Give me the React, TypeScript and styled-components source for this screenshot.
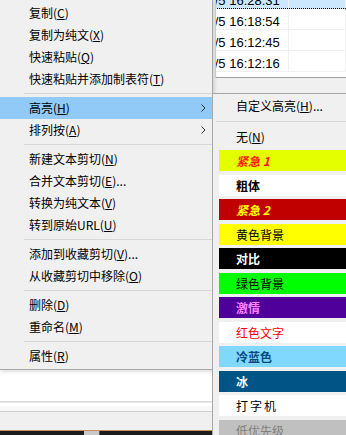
import React from "react";
import styled, { createGlobalStyle } from "styled-components";

const GlobalStyle = createGlobalStyle`
  html, body {
    margin: 0;
    padding: 0;
    width: 346px;
    height: 435px;
    overflow: hidden;
    background: #f0f0f0;
  }
  * { box-sizing: border-box; }
`;

const uiFont = `"Noto Sans CJK SC", "Microsoft YaHei", sans-serif`;

const Window = styled.div`
  position: relative;
  width: 346px;
  height: 435px;
  display: flex;
  flex-direction: column;
  background: #f0f0f0;
  overflow: hidden;
`;

const TopPane = styled.div`
  display: flex;
  height: 78px;
`;

const SidePane = styled.div`
  width: 216px;
  background: #f0f0f0;
  border-right: 1px solid #d4d4d4;
`;

const ListPane = styled.div`
  flex: 1;
  background: #fff;
  border-bottom: 1px solid #a0a0a0;
  overflow: hidden;
`;

const Rows = styled.div<{ $scroll: number }>`
  margin-top: -12px;
  margin-left: ${(p) => -p.$scroll}px;
`;

const Row = styled.div<{ $selected?: boolean }>`
  display: grid;
  grid-template-columns: 114px 1fr;
  height: 21px;
  background: ${(p) => (p.$selected ? "#cce8ff" : "#fff")};
  border-bottom: 1px ${(p) => (p.$selected ? "dotted #000" : "solid #f0f0f0")};
`;

const Cell = styled.div`
  font-family: "Liberation Sans", Arial, sans-serif;
  font-size: 13px;
  color: #000;
  line-height: 21px;
  padding-top: 2px;
  white-space: nowrap;
  overflow: hidden;
  border-right: 1px solid #f0f0f0;
`;

const Filler = styled.div`
  flex: 1;
`;

const Editor = styled.div`
  height: 33px;
  background: #fff;
  border-bottom: 1px solid #dadada;
`;

const Ruler = styled.div`
  height: 10px;
  background: #f8f8f8;
  border-top: 1px solid #e8e8e8;
  border-bottom: 1px solid #d0d0d0;
  box-shadow: inset 0 3px 0 #fff;
`;

const StatusGap = styled.div`
  height: 18px;
`;

const Taskbar = styled.div`
  height: 5px;
  background: #1c1c1c;
  border-top: 1px solid #c8915a;
  display: flex;
  padding-left: 84px;
`;

const TaskButton = styled.div`
  width: 16px;
  background: #c9c9c9;
  border-right: 1px solid #555;
`;

const Menu = styled.div`
  position: absolute;
  top: -2px;
  left: -1px;
  width: 214px;
  padding: 3px 0 2px;
  background: #f0f0f0;
  border: 1px solid #a8a8a8;
  box-shadow: 2px 2px 3px rgba(0, 0, 0, 0.12);
  font-family: ${uiFont};
  font-size: 12px;
  color: #000;
`;

const Item = styled.div<{ $active?: boolean }>`
  position: relative;
  height: 22px;
  line-height: 22px;
  padding-left: 29px;
  white-space: nowrap;
  background: ${(p) => (p.$active ? "#91c9f7" : "transparent")};
`;

const Arrow = styled.svg`
  position: absolute;
  right: 6px;
  top: 7px;
`;

const Separator = styled.div<{ $inset: number }>`
  height: 1px;
  margin: 3px 0 3px ${(p) => p.$inset}px;
  background: #d7d7d7;
`;

const SubMenu = styled.div`
  position: absolute;
  top: 93px;
  left: 212px;
  width: 160px;
  height: 360px;
  padding-top: 1px;
  background: #f0f0f0;
  border: 1px solid #a8a8a8;
  font-family: ${uiFont};
  font-size: 12px;
  color: #000;
`;

const SubItem = styled.div`
  height: 22px;
  line-height: 22px;
  padding-left: 23px;
  white-space: nowrap;
`;

const SubSeparator = styled(Separator)`
  margin-top: 4px;
  margin-bottom: 4px;
`;

const StyleList = styled.div`
  display: flex;
  flex-direction: column;
  gap: 3.5px;
  margin-top: 2px;
  padding-left: 6px;
`;

const StyleItem = styled.div<{
  $bg: string;
  $fg: string;
  $bold?: boolean;
  $italic?: boolean;
  $mono?: boolean;
}>`
  height: 21px;
  line-height: 21px;
  padding-left: 17px;
  white-space: nowrap;
  background: ${(p) => p.$bg};
  color: ${(p) => p.$fg};
  font-weight: ${(p) => (p.$bold ? 700 : 400)};
  font-style: ${(p) => (p.$italic ? "italic" : "normal")};
  letter-spacing: ${(p) => (p.$mono ? "2px" : "0")};
`;

type Entry = { label: string; key: string; tail?: string; sub?: boolean; active?: boolean } | "sep";

const entries: Entry[] = [
  { label: "复制", key: "C" },
  { label: "复制为纯文", key: "X" },
  { label: "快速粘贴", key: "Q" },
  { label: "快速粘贴并添加制表符", key: "T" },
  "sep",
  { label: "高亮", key: "H", sub: true, active: true },
  { label: "排列按", key: "A", sub: true },
  "sep",
  { label: "新建文本剪切", key: "N" },
  { label: "合并文本剪切", key: "E", tail: "..." },
  { label: "转换为纯文本", key: "V" },
  { label: "转到原始URL", key: "U" },
  "sep",
  { label: "添加到收藏剪切", key: "V", tail: "..." },
  { label: "从收藏剪切中移除", key: "O" },
  "sep",
  { label: "删除", key: "D" },
  { label: "重命名", key: "M" },
  "sep",
  { label: "属性", key: "R" },
];

const styles = [
  { label: "紧急 1", bg: "#e3ff00", fg: "#ff1a1a", bold: true, italic: true },
  { label: "粗体", bg: "#ffffff", fg: "#000", bold: true },
  { label: "紧急 2", bg: "#c00000", fg: "#ffff00", bold: true, italic: true },
  { label: "黄色背景", bg: "#ffff00", fg: "#000" },
  { label: "对比", bg: "#000000", fg: "#fff", bold: true },
  { label: "绿色背景", bg: "#00ff00", fg: "#000" },
  { label: "激情", bg: "#50009a", fg: "#ff80ff", bold: true },
  { label: "红色文字", bg: "#ffffff", fg: "#ff0000" },
  { label: "冷蓝色", bg: "#80d8ff", fg: "#004b80", bold: true },
  { label: "冰", bg: "#005486", fg: "#fff", bold: true },
  { label: "打字机", bg: "#ffffff", fg: "#000", mono: true },
  { label: "低优先级", bg: "#c0c0c0", fg: "#7f7f7f" },
];

const times = ["16:28:31", "16:18:54", "16:12:45", "16:12:16"];

const Mnemonic = ({ k }: { k: string }) => (
  <>
    (<u>{k}</u>)
  </>
);

export default function App() {
  return (
    <>
      <GlobalStyle />
      <Window>
        <TopPane>
          <SidePane />
          <ListPane>
            <Rows $scroll={41}>
              {times.map((t, i) => (
                <Row key={t} $selected={i === 0}>
                  <Cell>2023/1/5 {t}</Cell>
                  <Cell />
                </Row>
              ))}
            </Rows>
          </ListPane>
        </TopPane>
        <Filler />
        <Editor />
        <Ruler />
        <StatusGap />
        <Taskbar>
          <TaskButton />
        </Taskbar>

        <Menu>
          {entries.map((e, i) =>
            e === "sep" ? (
              <Separator key={i} $inset={24} />
            ) : (
              <Item key={i} $active={e.active}>
                {e.label}
                <Mnemonic k={e.key} />
                {e.tail}
                {e.sub && (
                  <Arrow width="5" height="8" viewBox="0 0 5 8">
                    <polyline points="0.5,0.5 4,4 0.5,7.5" fill="none" stroke="#333" strokeWidth="1" />
                  </Arrow>
                )}
              </Item>
            )
          )}
        </Menu>

        <SubMenu>
          <SubItem>
            自定义高亮<Mnemonic k="H" />...
          </SubItem>
          <SubSeparator $inset={3} />
          <SubItem>
            无<Mnemonic k="N" />
          </SubItem>
          <StyleList>
            {styles.map((s) => (
              <StyleItem
                key={s.label}
                $bg={s.bg}
                $fg={s.fg}
                $bold={s.bold}
                $italic={s.italic}
                $mono={s.mono}
              >
                {s.label}
              </StyleItem>
            ))}
          </StyleList>
        </SubMenu>
      </Window>
    </>
  );
}
